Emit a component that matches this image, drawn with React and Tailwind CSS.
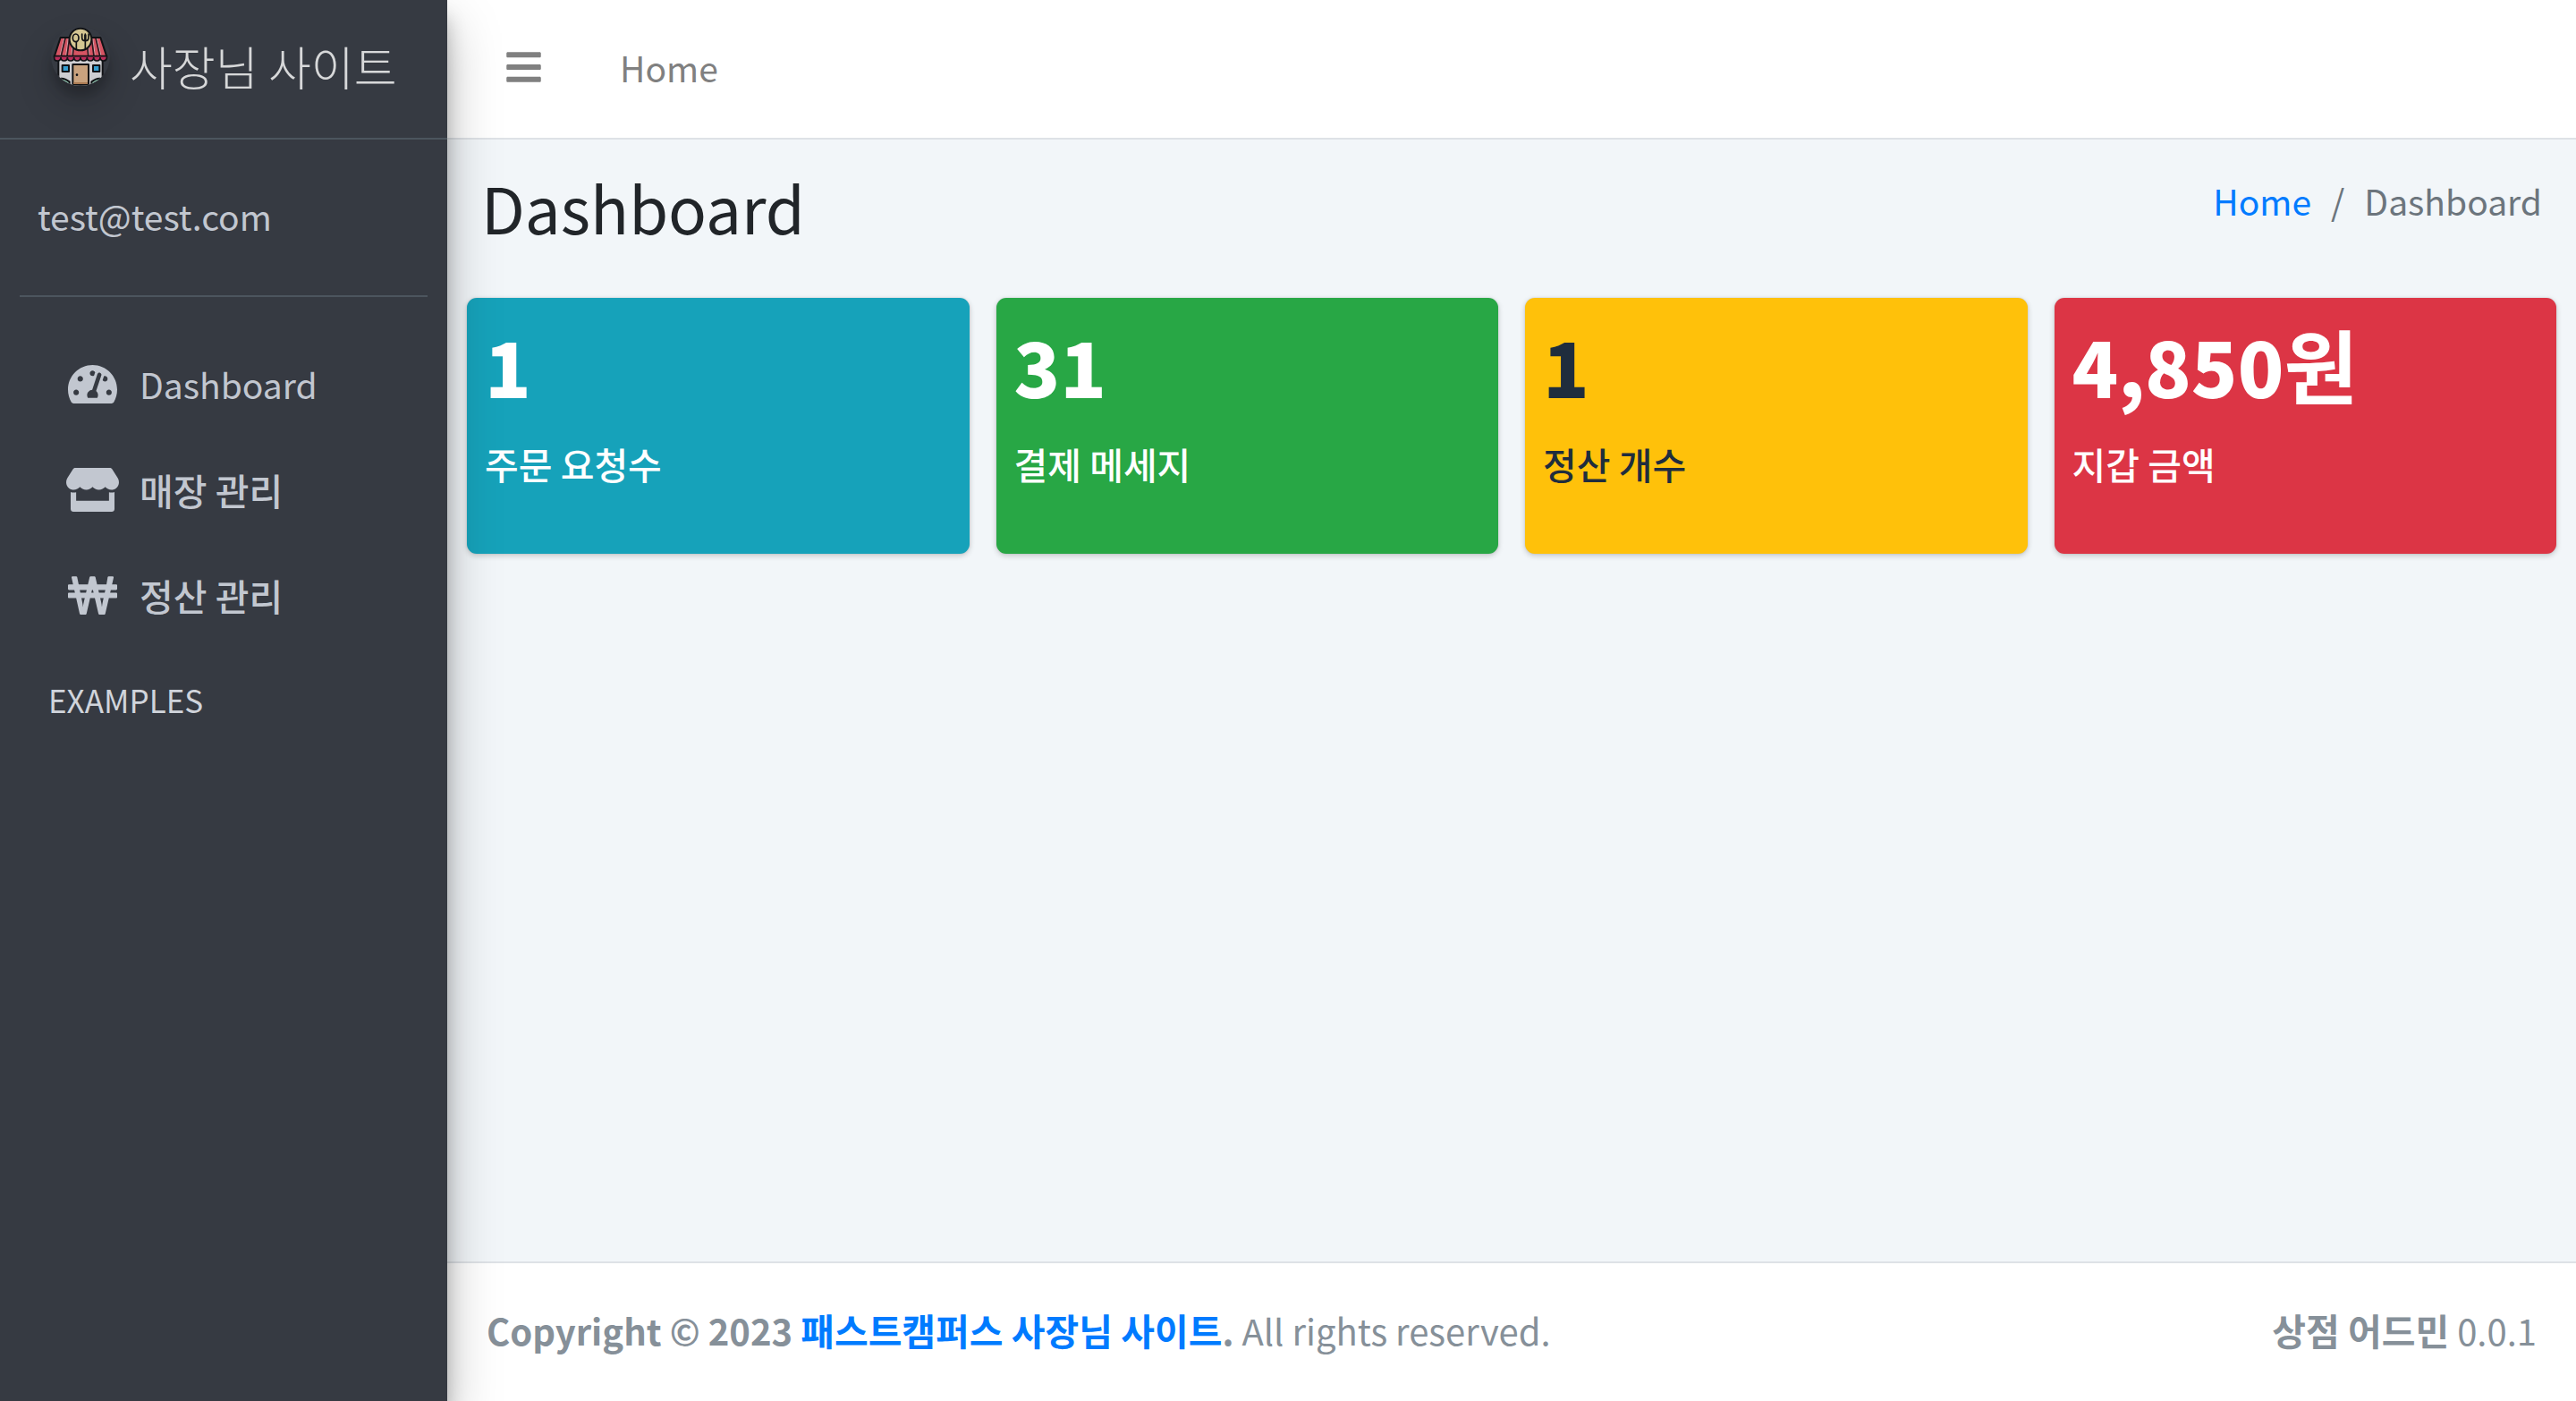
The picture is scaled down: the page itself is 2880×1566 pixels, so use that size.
import { FaBars, FaStore, FaTachometerAlt, FaWonSign } from "react-icons/fa";

const NAV = [
  { label: "Dashboard", icon: FaTachometerAlt, width: "w-[55px]", text: "text-[39px]" },
  { label: "매장 관리", icon: FaStore, width: "w-[59px]", text: "text-[41px] font-medium" },
  { label: "정산 관리", icon: FaWonSign, width: "w-[55px]", text: "text-[41px] font-medium" },
];

const CARDS = [
  { value: "1", label: "주문 요청수", tone: "bg-[#16a2ba] text-white" },
  { value: "31", label: "결제 메세지", tone: "bg-[#28a745] text-white" },
  { value: "1", label: "정산 개수", tone: "bg-[#ffc10a] text-[#1f2d3d]" },
  { value: "4,850", unit: "원", label: "지갑 금액", tone: "bg-[#dc3545] text-white" },
];

function ShopLogo() {
  const stroke = { stroke: "#08090b", strokeWidth: 6, strokeLinejoin: "round", strokeLinecap: "round" };
  return (
    <svg
      viewBox="0 0 198 198"
      aria-hidden="true"
      className="size-[66px] shrink-0 rounded-full opacity-80 shadow-[0_20px_40px_rgba(0,0,0,0.19),0_12px_12px_rgba(0,0,0,0.23)]"
    >
      <path d="M25 105H173V200H25Z" fill="#f4f4f6" {...stroke} />
      <path d="M14 188Q30 160 62 184V200H14Z" fill="#8fd3b4" {...stroke} />
      <path d="M184 188Q168 160 136 184V200H184Z" fill="#8fd3b4" {...stroke} />
      <path d="M46 192H62V200H46ZM136 192H152V200H136Z" fill="#c98a58" />
      <path d="M73 126H126V194H73Z" fill="#eebd8e" {...stroke} />
      <path d="M76 186H123V192H76Z" fill="#c98a58" />
      <circle cx="87" cy="161" r="4" fill="#08090b" />
      <path d="M38 129H60V150H38ZM141 129H163V150H141Z" fill="#35b5f1" {...stroke} />
      <path d="M32 36H166L187 100H11Z" fill="#ff5b6c" />
      <path
        d="M44 38L30 98M58 38L50 98M74 38L69 98M124 38L129 98M140 38L148 98M154 38L168 98"
        stroke="#f3c3c9"
        strokeWidth="3"
      />
      <path
        d="M48 38L34 98M62 38L54 98M78 38L73 98M120 38L125 98M136 38L144 98M150 38L164 98"
        stroke="#2a0f16"
        strokeWidth="5"
      />
      <path d="M32 36H166L187 100H11Z" fill="none" {...stroke} />
      <path
        d="M11 98H187V106Q184 114 176 114Q165 114 165 102Q165 114 154 114Q143 114 143 102Q143 114 132 114Q121 114 121 102Q121 114 110 114Q99 114 99 102Q99 114 88 114Q77 114 77 102Q77 114 66 114Q55 114 55 102Q55 114 44 114Q33 114 33 102Q33 114 22 114Q11 114 11 104Z"
        fill="#d92b60"
        stroke="#08090b"
        strokeWidth="5"
      />
      <circle cx="99" cy="42" r="37" fill="#fce9a6" {...stroke} />
      <ellipse cx="83" cy="37" rx="10" ry="13" fill="#fce9a6" {...stroke} strokeWidth="5" />
      <path d="M85 51V74M115 24V74M104 24V36Q104 47 115 47Q126 47 126 36V24" fill="none" {...stroke} strokeWidth="5" />
      <path d="M115 26V46" stroke="#08090b" strokeWidth="7" />
    </svg>
  );
}

function Sidebar() {
  return (
    <aside className="relative z-10 w-[500px] shrink-0 bg-[#363a42] text-[#c2c7d0] shadow-[0_28px_56px_rgba(0,0,0,0.25),0_20px_20px_rgba(0,0,0,0.22)]">
      <a href="#home" className="flex h-[156px] gap-[22px] border-b-2 border-[#4c555e] pt-[30px] pl-[57px]">
        <ShopLogo />
        <span className="text-[52px] leading-[88px] font-light whitespace-nowrap text-white/80">사장님 사이트</span>
      </a>
      <div className="px-[22px]">
        <div className="mb-11 flex h-44 items-center border-b-2 border-[#4c555e] px-5 pb-1">
          <a href="#profile">test@test.com</a>
        </div>
        <nav>
          <ul>
            {NAV.map(({ label, icon: Icon, width, text }) => (
              <li key={label} className="mb-2">
                <a href="#nav" className="flex h-[110px] items-center gap-4 px-11 pb-1">
                  <span className="flex w-[74px] justify-center">
                    <Icon className={`h-[49px] ${width}`} />
                  </span>
                  <span className={text}>{label}</span>
                </a>
              </li>
            ))}
            <li className="flex h-[110px] items-center px-8 pb-1.5 text-[35px] text-[#d0d4db]">EXAMPLES</li>
          </ul>
        </nav>
      </div>
    </aside>
  );
}

export default function App() {
  return (
    <div className="flex min-h-screen bg-[#f2f6f9] font-['Noto_Sans_CJK_KR',sans-serif] text-[39px] leading-[66px] text-[#212529]">
      <Sidebar />
      <div className="flex min-w-0 flex-1 flex-col">
        <header className="flex h-[156px] items-center gap-[88px] border-b-2 border-[#dee2e6] bg-white px-[66px] pb-1 text-[#808080]">
          <button type="button" aria-label="Toggle menu">
            <FaBars className="h-11 w-[39px]" />
          </button>
          <a href="#home">Home</a>
        </header>
        <main className="flex-1 px-[22px]">
          <div className="flex items-start justify-between px-4 pt-[30px] pb-[57px]">
            <h1 className="text-[71px] leading-[90px]">Dashboard</h1>
            <nav aria-label="Breadcrumb" className="leading-[76px]">
              <ol className="flex gap-[22px] text-[#6c757d]">
                <li><a href="#home" className="text-[#007bff]">Home</a></li>
                <li aria-hidden="true">/</li>
                <li>Dashboard</li>
              </ol>
            </nav>
          </div>
          <section className="grid grid-cols-4 gap-[30px]">
            {CARDS.map((c) => (
              <article
                key={c.label}
                className={`h-[286px] rounded-[11px] px-5 pt-5 shadow-[0_0_2px_rgba(0,0,0,0.125),0_2px_6px_rgba(0,0,0,0.2)] ${c.tone}`}
              >
                <h3 className="text-[85px] leading-[110px] font-black">
                  {c.value}
                  {c.unit && <span className="text-[90px] leading-none font-bold">{c.unit}</span>}
                </h3>
                <p className="mt-[22px] text-[41px] font-medium">{c.label}</p>
              </article>
            ))}
          </section>
        </main>
        <footer className="flex h-[156px] items-center justify-between border-t-2 border-[#dee2e6] bg-white px-11 pb-1.5 text-[40px] text-[#869099]">
          <p>
            <strong className="font-bold">Copyright © 2023 <a href="#site" className="text-[41px] text-[#007bff]">패스트캠퍼스 사장님 사이트</a>.</strong> All rights reserved.
          </p>
          <p><strong className="text-[41px] font-bold">상점 어드민</strong> 0.0.1</p>
        </footer>
      </div>
    </div>
  );
}
